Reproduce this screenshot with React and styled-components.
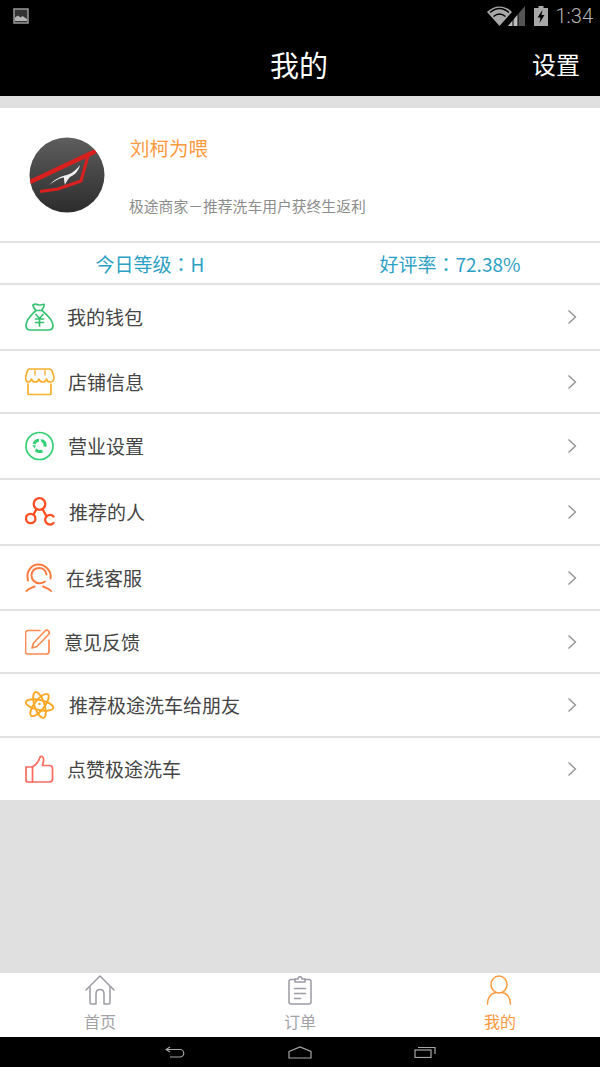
import React from 'react'
import styled, { createGlobalStyle } from 'styled-components'

const GlobalStyle = createGlobalStyle`
  html, body {
    margin: 0;
    padding: 0;
    background: #e0e0e0;
  }
`

const Page = styled.div`
  width: 600px;
  height: 1067px;
  display: flex;
  flex-direction: column;
  overflow: hidden;
  background: #e0e0e0;
  font-family: "Noto Sans CJK SC", "Noto Sans", sans-serif;
  text-spacing-trim: space-all;
`

const StatusBar = styled.div`
  height: 32px;
  background: #000;
  display: flex;
  align-items: center;
  padding: 0 7px 0 13px;
  color: #a8a8a8;
`
const StatusIcons = styled.div`
  margin-left: auto;
  display: flex;
  align-items: center;
`
const Clock = styled.span`
  font-family: Roboto, sans-serif;
  font-size: 20px;
  font-weight: 300;
  margin-left: 8px;
  color: #b4b4b4;
`

const Header = styled.div`
  height: 64px;
  background: #000;
  display: grid;
  grid-template-columns: 270px auto 1fr;
  align-items: center;
  color: #fff;
`
const Title = styled.div`
  grid-column: 2;
  font-size: 29px;
  line-height: 36px;
  margin-top: -1px;
`
const HeaderAction = styled.div`
  grid-column: 3;
  justify-self: end;
  margin-right: 20px;
  font-size: 24px;
  line-height: 32px;
`

const Profile = styled.div`
  margin-top: 12px;
  height: 133px;
  box-sizing: border-box;
  background: #fff;
  display: flex;
  padding: 29px 0 0 29px;
`
const Avatar = styled.svg`
  width: 76px;
  height: 76px;
  flex: none;
`
const ProfileText = styled.div`
  margin-left: 25px;
  display: flex;
  flex-direction: column;
`
const Name = styled.div`
  font-size: 19.500px;
  line-height: 24px;
  color: #ff9a3c;
  margin-top: -1px;
`
const Slogan = styled.div`
  font-size: 14.800px;
  line-height: 20px;
  color: #8c8c8c;
  margin-top: 36px;
  margin-left: -1px;
`

const Stats = styled.div`
  height: 42px;
  box-sizing: border-box;
  background: #fff;
  border-top: 2px solid #e2e2e2;
  display: flex;
  align-items: center;
  color: #2aa0c4;
  font-size: 19px;
`
const Stat = styled.div`
  width: 300px;
  text-align: center;
`
const Colon = styled.span`
  font-family: "Noto Sans CJK TC", sans-serif;
`

const Menu = styled.div`
  background: #fff;
`
const Row = styled.div`
  height: ${p => p.$height}px;
  box-sizing: border-box;
  border-top: 2px solid #e2e2e2;
  display: flex;
  align-items: center;
  padding: 0 23px 0 25px;
`
const IconBox = styled.div`
  width: 30px;
  height: 30px;
  flex: none;
  display: flex;
  align-items: center;
  justify-content: center;
`
const Label = styled.div`
  margin-left: ${p => p.$gap}px;
  font-size: 19px;
  line-height: 26px;
  color: #444;
`
const Chevron = styled.svg`
  margin-left: auto;
  width: 10px;
  height: 16px;
`

const Spacer = styled.div`
  flex: 1;
`

const TabBar = styled.div`
  height: 64px;
  background: #fff;
  display: grid;
  grid-template-columns: repeat(3, 1fr);
`
const Tab = styled.div`
  display: flex;
  flex-direction: column;
  align-items: center;
  color: ${p => (p.$active ? '#ff9a3c' : '#a2a2a6')};
  font-size: 16px;
  line-height: 20px;
`
const TabIcon = styled.svg`
  width: 34px;
  height: 34px;
  margin-bottom: 4px;
`

const NavBar = styled.div`
  height: 30px;
  background: #000;
  display: grid;
  grid-template-columns: repeat(3, 125px);
  justify-content: center;
  align-items: center;
  justify-items: center;
`

const Icon = ({ color, children, sw = 1.7 }) => (
  <svg width={30} height={30} viewBox="0 0 30 30" fill="none" stroke={color} strokeWidth={sw} strokeLinecap="round" strokeLinejoin="round">
    {children}
  </svg>
)

const rows = [
  {
    label: '我的钱包', height: 66, gap: 12,
    icon: (
      <Icon color="#35c26f">
        <path d="M8 3c2-1.500 3.500-1 5-.3 2 .8 4 .2 6-.4.8 1.800-1 4-2.500 6.200h-5.500C9.500 6.500 7.500 4.500 8 3z" />
        <path d="M11 8.500C8.500 11 1 17 1 23.500c0 3 2 4.500 4.500 4.500h18c2.500 0 4.500-1.500 4.500-4.500C28 17 19.500 11 17 8.500" />
        <path d="M11 12.500l3.500 4 3.500-4M10.500 17h8M10.500 20.500h8M14.500 16.500v7.500" />
      </Icon>
    ),
  },
  {
    label: '店铺信息', height: 63, gap: 13,
    icon: (
      <Icon color="#f9ae2c">
        <path d="M5 2h19c2 0 3 1 3.500 3l1.500 5.500c0 3-2 4.500-3.800 4.500-1.700 0-3.200-1-3.700-3-.6 2-2.400 3-3.700 3-1.500 0-3.300-1-3.800-3-.5 2-2.300 3-3.800 3-1.300 0-3.100-1-3.700-3-.5 2-2 3-3.700 3C2 15 0.500 13.500 0.500 10.500L2 5c.5-2 1.500-3 3-3z" />
        <path d="M10 3v5M20 3v5" strokeWidth="1.300" />
        <path d="M3 17v9.500c0 .5.500 1 1 1h21c.5 0 1-.5 1-1V17" />
      </Icon>
    ),
  },
  {
    label: '营业设置', height: 66, gap: 13,
    icon: (
      <Icon color="#35cf74">
        <circle cx="14.500" cy="15" r="13.500" />
        <path d="M9 13c.8-2.300 2.800-3.800 5-3.800M17.500 9.800c2 1.200 3 3.500 2.500 5.800M17.500 19.800c-2 1-4.500 1-6.300-.3" strokeWidth="3" strokeLinecap="butt" />
        <path d="M7.500 14l3.500.5-1.500 3zM15.500 8l3.500 1-2 3zM10 21l1-4 2.500 3z" fill="#35cf74" stroke="none" />
      </Icon>
    ),
  },
  {
    label: '推荐的人', height: 66, gap: 14,
    icon: (
      <Icon color="#ff4f22" sw={2.300}>
        <circle cx="14.500" cy="7" r="5.800" />
        <circle cx="5.700" cy="21.500" r="4.700" />
        <path d="M28.500 19.500a4.800 4.800 0 1 0 0 6.500" />
        <path d="M11.500 12l-3 5.500M17.500 12l3.500 6.500" />
      </Icon>
    ),
  },
  {
    label: '在线客服', height: 65, gap: 11,
    icon: (
      <Icon color="#ff7a3d" sw={2}>
        <path d="M3 17.500C.5 8.500 6.500 1.500 13.500 1.500S27 8.500 25.500 15.500" />
        <path d="M20 18.500c-2 1.500-4 2-6 1.800-4.500-.3-7.500-3.800-7.500-8 0-4.500 3.500-7.300 7.500-7.300s7 2.600 7.500 6.500" />
        <path d="M1.500 28c2-2.500 5-3 8-4.500M26 28c-2-2.500-5-3-8-4.500" />
      </Icon>
    ),
  },
  {
    label: '意见反馈', height: 63, gap: 9,
    icon: (
      <Icon color="#ff8a52">
        <path d="M15 3.500H3a2.500 2.500 0 0 0-2.500 2.500V24.500A2.500 2.500 0 0 0 3 27h18.500a2.500 2.500 0 0 0 2.500-2.500V13" />
        <path d="M7 21l1.500-5L20 4c1-1 2.500-1 3.500 0s1 2.500 0 3.500L12 19.500z" />
      </Icon>
    ),
  },
  {
    label: '推荐极途洗车给朋友', height: 64, gap: 14,
    icon: (
      <Icon color="#ffa724" sw={1.900}>
        <ellipse cx="14.500" cy="15" rx="14" ry="5" transform="rotate(12 14.500 15)" />
        <ellipse cx="14.500" cy="15" rx="13.500" ry="5" transform="rotate(72 14.500 15)" />
        <ellipse cx="14.500" cy="15" rx="13.500" ry="5" transform="rotate(-52 14.500 15)" />
        <circle cx="14.500" cy="14" r="1.200" fill="#ffa724" stroke="none" />
      </Icon>
    ),
  },
  {
    label: '点赞极途洗车', height: 64, gap: 12,
    icon: (
      <Icon color="#fa6a60">
        <path d="M1 13h6.500v15H3a2 2 0 0 1-2-2z" />
        <path d="M7.500 13c3-2 6-5 7-8.500.5-2 1.500-2.500 2.500-2s2 2 1.500 4.500l-1 4.500h7c1.500 0 3 1 3 2.500V25c0 2-1.500 3-3 3H7.500" />
      </Icon>
    ),
  },
]

export default function App() {
  return (
    <Page>
      <GlobalStyle />
      <StatusBar>
        <svg width="18" height="16" viewBox="0 0 18 16">
          <rect x="1" y="1" width="14" height="14" fill="#333" stroke="#999" strokeWidth="1.500" />
          <path d="M2 13V9.500l3-2 2.500 2 2-1.500L14 11v2z" fill="#b5b5b5" />
        </svg>
        <StatusIcons>
          <svg width="38" height="20" viewBox="0 0 38 20">
            <path d="M0 6c7-7.500 18-7.500 25 0L12.500 20z" fill="#a8a8a8" />
            <path d="M3 6.500c6-5 13-5 19 0M6.500 10.500c4-3.300 8-3.300 12 0" stroke="#000" strokeWidth="1.300" fill="none" />
            <path d="M21 20L38 0v20z" fill="#555" />
            <path d="M21 20l10-11.800V20z" fill="#bdbdbd" />
            <path d="M26 20v-8M31 20V8" stroke="#000" strokeWidth="1" />
          </svg>
          <svg width="14" height="20" viewBox="0 0 14 20" style={{ marginLeft: 9 }}>
            <path d="M4.500 0h5v2H14v18H0V2h4.500z" fill="#a8a8a8" />
            <path d="M8.500 4L3.500 11.500h3L5.500 17l5-8H7.500z" fill="#000" />
          </svg>
          <Clock>1:34</Clock>
        </StatusIcons>
      </StatusBar>
      <Header>
        <Title>我的</Title>
        <HeaderAction>设置</HeaderAction>
      </Header>

      <Profile>
        <Avatar viewBox="0 0 76 76">
          <defs>
            <linearGradient id="avatarBg" x1="0" y1="0" x2="0" y2="1">
              <stop offset="0" stopColor="#5e5e5e" />
              <stop offset="1" stopColor="#2c2c2c" />
            </linearGradient>
            <clipPath id="avatarClip">
              <circle cx="38" cy="38" r="37.500" />
            </clipPath>
          </defs>
          <circle cx="38" cy="38" r="37.500" fill="url(#avatarBg)" />
          <g clipPath="url(#avatarClip)">
            <path d="M1 45L67 14" fill="none" stroke="#d9201f" strokeWidth="4.500" />
            <path d="M59 19L52 44L29 52L11 54.500" fill="none" stroke="#d9201f" strokeWidth="3" />
            <path d="M20 48C26 42 32 39 38 38C44 36 48 32 51 28C50 33 46 38 41 40C39 42 37 45 36 48C35 44 35 42 35 40.500C30 41 26 44 20 48z" fill="#f2f2f2" />
          </g>
        </Avatar>
        <ProfileText>
          <Name>刘柯为喂</Name>
          <Slogan>极途商家－推荐洗车用户获终生返利</Slogan>
        </ProfileText>
      </Profile>

      <Stats>
        <Stat>今日等级<Colon>：</Colon>H</Stat>
        <Stat>好评率<Colon>：</Colon>72.38%</Stat>
      </Stats>

      <Menu>
        {rows.map(row => (
          <Row key={row.label} $height={row.height}>
            <IconBox>{row.icon}</IconBox>
            <Label $gap={row.gap}>{row.label}</Label>
            <Chevron viewBox="0 0 10 16">
              <path d="M1.500 1.500L8.500 8l-7 6.500" fill="none" stroke="#8f8f8f" strokeWidth="1.300" />
            </Chevron>
          </Row>
        ))}
      </Menu>

      <Spacer />

      <TabBar>
        <Tab>
          <TabIcon viewBox="0 0 34 34" fill="none" stroke="#9b9ba3" strokeWidth="1.500" strokeLinejoin="round" strokeLinecap="round">
            <path d="M3 17L17 3 31 17" />
            <path d="M7 14v15.500c0 1 .5 1.500 1.500 1.500H13V21c0-3 2-4.500 4-4.500s4 1.500 4 4.500v10h4.500c1 0 1.500-.5 1.500-1.500V14" />
          </TabIcon>
          首页
        </Tab>
        <Tab>
          <TabIcon viewBox="0 0 34 34" fill="none" stroke="#9b9ba3" strokeWidth="1.500" strokeLinejoin="round" strokeLinecap="round">
            <path d="M12 6.500H8a2 2 0 0 0-2 2V29a2 2 0 0 0 2 2h18a2 2 0 0 0 2-2V8.500a2 2 0 0 0-2-2h-4" />
            <path d="M12 9h10V6h-3c0-3-4-3-4 0h-3z" />
            <path d="M11.500 15.500h11M11.500 20.500h11M11.500 25.500h6" />
          </TabIcon>
          订单
        </Tab>
        <Tab $active>
          <TabIcon viewBox="0 0 34 34" fill="none" stroke="#ff9a3c" strokeWidth="1.500" strokeLinecap="round">
            <ellipse cx="16" cy="11.500" rx="8" ry="8.500" />
            <path d="M4.500 31c0-7 4-11 8.500-11.500M27.500 31c0-7-4-11-8.500-11.500" />
          </TabIcon>
          我的
        </Tab>
      </TabBar>

      <NavBar>
        <svg width="20" height="12" viewBox="0 0 20 12" fill="none" stroke="#a6a6a6" strokeWidth="1.200">
          <path d="M1 3.500h14a3.500 3.500 0 0 1 0 7.500H5M5 1L1 3.500 5 6" />
        </svg>
        <svg width="24" height="13" viewBox="0 0 24 13" fill="none" stroke="#a6a6a6" strokeWidth="1.200">
          <path d="M1 5.500L12 1l11 4.500V12H1z" />
        </svg>
        <svg width="22" height="12" viewBox="0 0 22 12" fill="none" stroke="#a6a6a6" strokeWidth="1.200">
          <rect x="1" y="4" width="16" height="7.500" />
          <path d="M4 1.500h17V8" />
        </svg>
      </NavBar>
    </Page>
  )
}
